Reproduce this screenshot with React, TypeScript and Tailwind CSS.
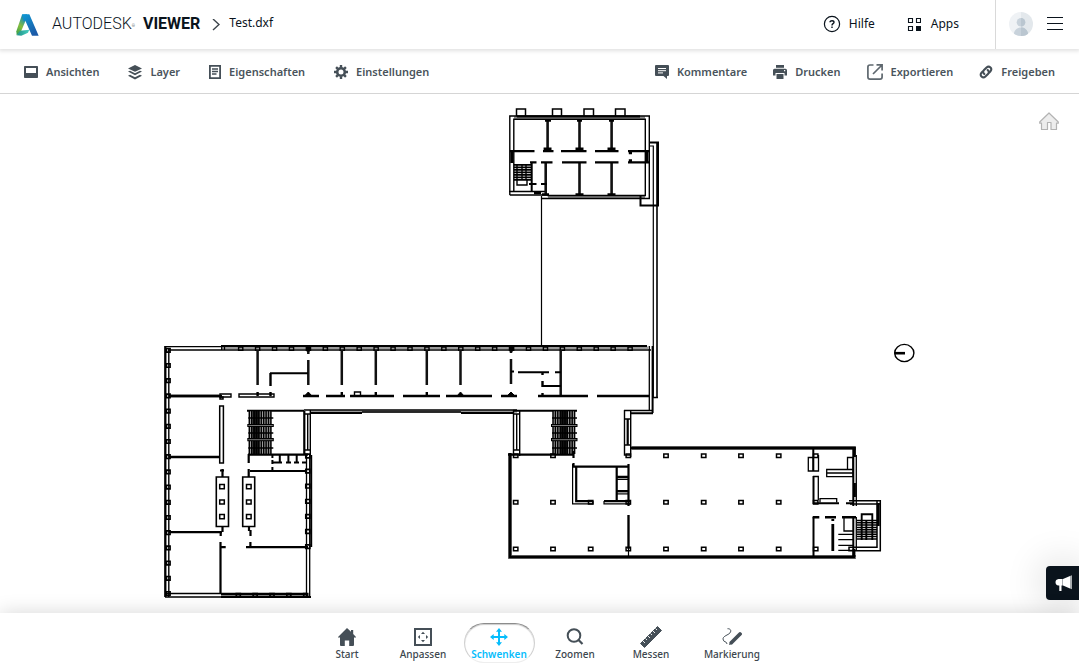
import React from "react";

function AutodeskLogo() {
  return (
    <svg viewBox="0 0 69 66" className="h-[22px] w-[23px] shrink-0" aria-hidden="true">
      <defs>
        <linearGradient id="leg-left" x1="0.7" y1="0" x2="0.3" y2="1">
          <stop offset="0" stopColor="#0a78be" />
          <stop offset="0.3" stopColor="#3fa08a" />
          <stop offset="0.6" stopColor="#86bc3c" />
          <stop offset="1" stopColor="#3fa34a" />
        </linearGradient>
        <linearGradient id="leg-right" x1="0" y1="0" x2="0.6" y2="1">
          <stop offset="0" stopColor="#0d9bd6" />
          <stop offset="1" stopColor="#1c5aa8" />
        </linearGradient>
        <linearGradient id="leg-base" x1="0" y1="0" x2="1" y2="0">
          <stop offset="0" stopColor="#1f8f86" />
          <stop offset="1" stopColor="#45d0c0" />
        </linearGradient>
      </defs>
      <path d="M18 2 L33 1 L28 22 L16 50 L2 64 L1 52 Z" fill="url(#leg-left)" />
      <path d="M18 1 H40 L68 65 H48 L28 20 L23 22 Z" fill="url(#leg-right)" />
      <path d="M2 64 L12 50 L40 47 L36 56 L16 65 Z" fill="url(#leg-base)" />
    </svg>
  );
}

function HelpIcon() {
  return (
    <svg viewBox="0 0 18 18" className="size-[18px]" fill="none" stroke="#0a131c" aria-hidden="true">
      <circle cx="9" cy="9" r="7.6" strokeWidth="1.2" />
      <path d="M7 7.2 C7 5.2 11 5.2 11 7.3 C11 8.8 9 8.6 9 10.4 M9 11.6 V13" strokeWidth="1.4" />
    </svg>
  );
}

function AppsIcon() {
  return (
    <svg viewBox="0 0 14 14" className="size-[14px]" fill="none" stroke="#0a131c" aria-hidden="true">
      <path d="M1.5 1.5 H5.5 V5.5 H1.5 Z M9.5 1.5 H13.5 V5.5 H9.5 Z M1.5 9.5 H5.5 V13.5 H1.5 Z" strokeWidth="1.1" />
      <path d="M9 9 H14 V14 H9 Z" fill="#0a131c" stroke="none" />
    </svg>
  );
}

function Avatar() {
  return (
    <svg viewBox="0 0 24 24" className="size-6" aria-hidden="true">
      <defs>
        <clipPath id="avatar-clip">
          <circle cx="12" cy="12" r="12" />
        </clipPath>
      </defs>
      <g clipPath="url(#avatar-clip)">
        <path d="M0 0 H12 V24 H0 Z" fill="#eff2f5" />
        <path d="M12 0 H24 V24 H12 Z" fill="#e3e8ec" />
        <circle cx="12" cy="10.3" r="4.3" fill="#c8d2db" />
        <path d="M4.5 24 C5 17 9 15.5 12 15.5 C15 15.5 19 17 19.5 24 Z" fill="#c8d2db" />
        <path d="M12 6 A4.3 4.3 0 0 1 12 14.6 Z M12 15.5 C15 15.5 19 17 19.5 24 H12 Z" fill="#bac6d0" />
      </g>
    </svg>
  );
}

function ViewsIcon() {
  return (
    <svg viewBox="0 0 14 12" className="h-3 w-[14px]" aria-hidden="true">
      <path fillRule="evenodd" fill="#454f57" d="M.8 0 H13.2 Q14 0 14 .8 V11.2 Q14 12 13.2 12 H.8 Q0 12 0 11.2 V.8 Q0 0 .8 0 Z M2 2 V7 H12 V2 Z" />
    </svg>
  );
}

function LayersIcon() {
  return (
    <svg viewBox="0 0 14 15" className="h-[15px] w-[14px]" fill="#454f57" aria-hidden="true">
      <path d="M7 0 L14 3.4 L7 6.8 L0 3.4 Z" />
      <path d="M0 6.6 L2 5.7 L7 8.2 L12 5.7 L14 6.6 L7 10.2 Z" />
      <path d="M0 10.7 L2 9.8 L7 12.3 L12 9.8 L14 10.7 L7 14.6 Z" />
    </svg>
  );
}

function PropertiesIcon() {
  return (
    <svg viewBox="0 0 12 14" className="h-[14px] w-3" fill="none" stroke="#454f57" aria-hidden="true">
      <path d="M.9 .9 H11.1 V13.1 H.9 Z" strokeWidth="1.8" />
      <path d="M3 4 H9 M3 6.5 H9 M3 9 H7.5" strokeWidth="1.3" />
    </svg>
  );
}

function GearIcon() {
  return (
    <svg viewBox="0 0 14 14" className="size-[14px]" fill="none" stroke="#454f57" aria-hidden="true">
      <circle cx="7" cy="7" r="3.8" strokeWidth="2.6" />
      <path
        d="M7 0 V2.5 M7 11.5 V14 M0 7 H2.5 M11.5 7 H14 M2.1 2.1 L3.8 3.8 M10.2 10.2 L11.9 11.9 M11.9 2.1 L10.2 3.8 M2.1 11.9 L3.8 10.2"
        strokeWidth="2.4"
      />
    </svg>
  );
}

function CommentIcon() {
  return (
    <svg viewBox="0 0 14 14" className="size-[14px]" aria-hidden="true">
      <path d="M1 0 H13 Q14 0 14 1 V10 Q14 11 13 11 H12 V14 L8.5 11 H1 Q0 11 0 10 V1 Q0 0 1 0 Z" fill="#454f57" />
      <path d="M3 3.5 H11 M3 5.7 H11 M3 7.9 H8" stroke="#fff" strokeWidth="1" />
    </svg>
  );
}

function PrinterIcon() {
  return (
    <svg viewBox="0 0 14 14" className="size-[14px]" fill="#454f57" aria-hidden="true">
      <path d="M3 0 H11 V2.8 H3 Z" />
      <path fillRule="evenodd" d="M1.5 3.8 H12.5 Q14 3.8 14 5.3 V10.5 H11.5 V8 H2.5 V10.5 H0 V5.3 Q0 3.8 1.5 3.8 Z M11 5 V6.2 H12.2 V5 Z" />
      <path d="M3.5 9 H10.5 V14 H3.5 Z" />
    </svg>
  );
}

function ExportIcon() {
  return (
    <svg viewBox="0 0 16 16" className="size-4" fill="none" stroke="#5f686f" aria-hidden="true">
      <path d="M6.5 1 H3 Q.9 1 .9 3 V13 Q.9 15.1 3 15.1 H13 Q15.1 15.1 15.1 13 V9.5" strokeWidth="1.7" />
      <path d="M6 10 L14.5 1.5 M9.5 .9 H15.1 V6.5" strokeWidth="1.7" />
    </svg>
  );
}

function LinkIcon() {
  return (
    <svg viewBox="0 0 14 14" className="size-[14px]" fill="none" stroke="#454f57" strokeWidth="2.1" strokeLinecap="round" aria-hidden="true">
      <path d="M5.3 9 C3.8 7.6 4 6.1 5 5.1 L7.6 2.5 C10.2 0 14 3.6 11.5 6.2 L10.3 7.5" />
      <path d="M8.7 5 C10.2 6.4 10 7.9 9 8.9 L6.4 11.5 C3.8 14 0 10.4 2.5 7.8 L3.7 6.5" />
    </svg>
  );
}

function HomeIcon() {
  return (
    <svg viewBox="0 0 18 18" className="size-[18px]" fill="#454f57" aria-hidden="true">
      <path d="M9 0 L13 3.8 V2 H15.2 V6 L18 8.9 V9.6 H16 V17 Q16 18 15 18 H11.2 V12.5 H6.8 V18 H3 Q2 18 2 17 V9.6 H0 V8.9 Z" />
    </svg>
  );
}

function FitIcon() {
  return (
    <svg viewBox="0 0 18 18" className="size-[18px]" aria-hidden="true">
      <path d="M1 1 H17 V17 H1 Z" fill="none" stroke="#454f57" strokeWidth="2" />
      <path d="M9 3.8 L11 6 H7 Z M9 14.2 L11 12 H7 Z M3.8 9 L6 7 V11 Z M14.2 9 L12 7 V11 Z" fill="#454f57" />
    </svg>
  );
}

function PanIcon() {
  return (
    <svg viewBox="0 0 18 18" className="size-[18px]" aria-hidden="true">
      <path d="M9 2 V16 M2 9 H16" stroke="#06bdfc" strokeWidth="2" />
      <path d="M9 0 L12 3.7 H6 Z M9 18 L12 14.3 H6 Z M0 9 L3.7 6 V12 Z M18 9 L14.3 6 V12 Z" fill="#06bdfc" />
    </svg>
  );
}

function ZoomIcon() {
  return (
    <svg viewBox="0 0 18 18" className="size-[18px]" fill="none" stroke="#454f57" aria-hidden="true">
      <circle cx="8" cy="7.5" r="6.3" strokeWidth="2" />
      <path d="M12.3 11.8 L16.5 16" strokeWidth="2.2" />
    </svg>
  );
}

function RulerIcon() {
  return (
    <svg viewBox="0 0 22 22" className="size-[22px]" aria-hidden="true">
      <path d="M17.5 .5 L21.5 4.5 L4.5 21.5 L.5 17.5 Z" fill="#454f57" stroke="#454f57" strokeLinejoin="round" />
      <path d="M3 15 L5 17 M5.5 12.5 L7 14 M8 10 L10 12 M10.5 7.5 L12 9 M13 5 L15 7 M15.5 2.5 L17 4" stroke="#fff" strokeWidth="0.9" />
    </svg>
  );
}

function MarkupIcon() {
  return (
    <svg viewBox="0 0 20 18" className="h-[18px] w-5" fill="none" stroke="#454f57" aria-hidden="true">
      <path d="M5.5 .7 C9 .5 10 3.5 7 5.8 C4.5 7.5 1 8.5 1 11 C1 14.5 5 13 5 16" strokeWidth="1" />
      <path d="M9.5 14.5 L18 6" strokeWidth="3.8" strokeLinecap="round" />
      <path d="M7 17 L8 13.5 L10.8 16 Z" fill="#454f57" stroke="none" />
    </svg>
  );
}

function MegaphoneIcon() {
  return (
    <svg viewBox="0 0 18 17" className="h-[17px] w-[18px]" aria-hidden="true">
      <path d="M3.5 4 H7 V10.5 H6.5 V16 H4.3 V10.5 H3.5 Q.5 10 .5 7.2 Q.5 4.5 3.5 4 Z" fill="#fff" />
      <path d="M8 4 L15 1 V13.5 L8 10.5 Z" fill="#fff" />
      <path d="M7 4 H8 V10.5 H7 Z M15 1 L17 .3 V14.3 L15 13.5 Z" fill="#a9adb1" />
    </svg>
  );
}

/* Rectangle outline centred on each [x, y] pair. */
function squares(points: number[][], w: number, h: number) {
  return points.map(([x, y]) => `M${x - w / 2} ${y - h / 2} h${w} v${h} h${-w} Z`).join(" ");
}

const hline = (y: number, segments: number[][]) => segments.map(([a, b]) => `M${a} ${y} H${b}`).join(" ");
const range = (count: number, start: number, step: number) => Array.from({ length: count }, (_, i) => start + i * step);

function Stairs({ x, dark }: { x: number; dark: number }) {
  return (
    <g>
      <path d={`M${x} 432.5 h22`} stroke="#aaa" strokeWidth="42" />
      <path d={range(10, x, 2.4).map((v) => `M${v} 411 V454`).join(" ")} strokeWidth="1.5" />
      <path d={`M${dark} 411 V454`} strokeWidth="7" opacity="0.85" />
      <path d={range(3, 418, 15).map((v) => `M${x - 1} ${v} h25`).join(" ")} strokeWidth="1.5" />
      <path d={`M${x - 2} 425.5 h26.5 M${x - 2} 439.7 h26.5`} strokeWidth="3.2" />
      <path d={`M${x - 1} 425.5 h24.5 M${x - 1} 439.7 h24.5`} stroke="#777" strokeWidth="1" />
    </g>
  );
}

function FloorPlan() {
  const topPosts = range(24, 240.7, 16.93).map((x) => [x, 348.7]);
  const leftPosts = range(17, 350.3, 15.2).map((y) => [168.3, y]);
  const rightPosts = range(7, 456, 15.1).map((y) => [307.8, y]);
  const bottomPosts = range(5, 238.3, 16.85).map((x) => [x, 595]);
  const columns = [515.7, 553, 590.7, 628.3, 666, 703.7, 741, 778.7, 815.7];
  const hallPosts = [
    ...columns.filter((x) => x !== 590.7).map((x) => [x, 455.7]),
    ...columns.map((x) => [x, 502.3]),
    ...columns.map((x) => [x, 549]),
  ];
  return (
    <svg viewBox="0 94 1079 519" className="h-full w-full" fill="none" stroke="#000" role="img" aria-label="Test.dxf">
      {/* North wing */}
      <path d="M516.5 117 V109 H525.5 V117 M552.5 117 V109 H561.5 V117 M584 117 V109 H593.5 V117 M615.5 117 V109 H625 V117" strokeWidth="1.5" />
      <path d="M514 117.5 H645 M548 197 H645" stroke="#888" strokeWidth="2.5" />
      <path d="M509.8 195 V116 H649.3 V198.5 H541 M513.8 192 V119.3 H645.3 V195.5 H548 V195 H509.8 M509 191.5 H546" strokeWidth="1.4" />
      <path d="M517 116.4 H640" strokeWidth="2.4" />
      <path d="M547.6 120 V151 M579.5 120 V151 M611.6 120 V151 M579.5 162 V195 M611.6 162 V195 M545.7 162 V194" stroke="#111" strokeWidth="2.6" />
      <path d="M511.8 151 V163 M647 151 V163" strokeWidth="3" />
      <path d={hline(151.2, [[510, 534.5], [543, 553.5], [561, 586.5], [595, 618.5], [628, 649]])} strokeWidth="2.2" />
      <path d={hline(162.4, [[530, 536.5], [541, 552.5], [562, 586.5], [595, 618.5], [628, 649]])} strokeWidth="2.2" />
      <path d="M543.6 148.8 H551.5 M575.5 148.8 H583.5 M607.5 148.8 H615.5 M545 120.5 H551 M577 120.5 H582 M609 120.5 H614 M575.5 194.5 H583.5 M607.5 194.5 H615.5 M534 193 H541 M542 194.5 H549" strokeWidth="2.6" />
      <path d="M531.7 162 V191 M529 184 H536.5 M541 184 H547" strokeWidth="2" />
      <path d="M628.8 152.8 H632 M628.8 160.7 H632" strokeWidth="3" />
      <path d={range(7, 164.8, 2.5).map((y) => `M514 ${y} H531`).join(" ")} strokeWidth="1.8" />
      <path d="M517 164 V185 H527 V180 M522 164 V180 M526 164 V180" strokeWidth="1.4" />
      <path d="M649 142.5 H658 V205.5 H640.5 V196" strokeWidth="2" />
      <path d="M649 146 H653.3 V397 M541.5 196 V346" strokeWidth="1.2" />
      <path d="M657 142 V397.5 M653 397.5 H658" strokeWidth="1.6" />

      {/* Connecting corridor */}
      <path d="M222 347.8 H648 M310 411.5 H517" stroke="#999" strokeWidth="2.6" />
      <path d="M165 346.7 H221 M168 350 H651 M221.7 345 V350 M224.5 345 V350" strokeWidth="1.3" />
      <path d="M221 346 H647" strokeWidth="2" />
      <path d={squares(topPosts, 4.2, 3.4)} strokeWidth="1.4" />
      <path d="M257.6 350 V385 M341.8 350 V385 M375.8 350 V385 M426.8 350 V385 M460.5 350 V385 M308.3 347 V354 M308.3 360 V385 M511 347 V353 M511 359 V384 M560.7 350 V396" stroke="#111" strokeWidth="2.5" />
      <path d="M257.6 392 V396 M270.5 392 V396 M341.8 392 V396 M375.8 392 V396 M426.8 392 V396 M542.5 393 V396 M542.5 381 V387 M542.5 372 V375 M270.5 373 V386" strokeWidth="2.4" />
      <path d="M308.3 392 L312 396 H304.5 Z M460.5 392 L464 396 H457 Z M511 392 L515 396 H507 Z M306.5 347 H310 V351 H306.5 Z M509.5 347 H513 V351 H509.5 Z" fill="#000" />
      <path d="M270 373.2 H308 M542 386 H561 M518 372.2 H549 M555 372.2 H561 M511 371.5 H514" strokeWidth="1.9" />
      <path d={hline(396, [[169, 222], [303, 319], [326, 345], [350, 394], [403, 440], [446, 492], [501, 517], [538, 588], [597, 649]])} strokeWidth="2.3" />
      <path d="M220 394 H231 V397 H220 Z M239 394 H274 V397 H239 Z M354.5 392 H360.5 V396 H354.5 Z" strokeWidth="1.4" />
      <path d="M247 410.8 H304 M513 410.8 H577 M311 413 H362 M461 413 H513 M631 413.3 H653" strokeWidth="2" />
      <path d="M304 410 H517 M362 412 H461 M624 410.5 H653 M649.3 346 V411" strokeWidth="1.3" />
      <path d="M652.6 346 V413" strokeWidth="2" />

      {/* Pillars along the corridor */}
      <path d="M304.3 411 V454 M627.7 419 V445" strokeWidth="2.2" />
      <path d="M307.7 414 V450 M310.3 410 V455 M304 414 H310 M304 450 H310 M513.5 410 V456 M519.7 410 V456 M516.7 414 V450 M513.5 414 H520 M513.5 450 H520 M624.5 410 V455 H631 M630.7 410 V457 M624.5 419 H631 M624.5 445 H631" strokeWidth="1.4" />
      <Stairs x={249.3} dark={256} />
      <Stairs x={553} dark={563.7} />

      {/* West wing */}
      <path d="M165.3 346 V597 M169 396 H220 M169 457 H220 M169 532.2 H222" strokeWidth="2.3" />
      <path d="M168.8 348 V597 M165 593.5 H306 M165 597 H221" strokeWidth="1.4" />
      <path d={squares(leftPosts, 3.6, 3.6)} strokeWidth="1.6" />
      <path d="M219.7 406 H223.4 V463 H219.7 Z M220 397 H223 V399 H220 Z" strokeWidth="1.5" />
      <path d="M216.3 477 H228.5 V526.5 H216.3 Z M242.7 477 H254.7 V526.5 H242.7 Z" strokeWidth="1.6" />
      <path d={squares([[222, 486.7], [222, 502], [222, 516.7], [248.8, 486.7], [248.8, 502], [248.8, 516.7]], 4.6, 4.2)} strokeWidth="1.5" />
      <path d="M220 470.5 H224 M248.7 469 V477 M222.5 469 V477 M222.5 526 V532 M220.7 531 V536 M249 526 V531 M250.5 530 V536 M248.7 454 V463 M250.4 542 V548 M220.5 542 V594 M219.5 547.2 H225.7 M246 547.2 H308 M250 471 H307 M248 454.7 H308" strokeWidth="2.2" />
      <path d={hline(462.5, [[272, 282], [286, 291], [294, 299], [302, 307]])} strokeWidth="1.8" />
      <path d="M279.8 455 V462 M288.4 455 V462 M296.7 455 V462 M272.4 454 V458 M272.4 460 V464 M272.4 467 V471" strokeWidth="2" />
      <path d="M306.5 455 V597 M309.7 455 V597" strokeWidth="1.3" />
      <path d="M311.2 455 V547" strokeWidth="2" />
      <path d={squares(rightPosts, 4, 3.6) + " " + squares(bottomPosts, 4, 3)} strokeWidth="1.7" />
      <path d="M221 594.5 H306 M221 597 H311" strokeWidth="1.9" />

      {/* East hall */}
      <path d="M510 453 V557 H856 M631 448 H856" stroke="#777" strokeWidth="4" />
      <path d="M510 453 V557 H855 M631 448 H855" strokeWidth="2.6" />
      <path d="M508 454.7 H574 M573.5 451 V458 M573.5 463 V467" strokeWidth="2.2" />
      <path d={squares(hallPosts, 4.4, 3.6)} strokeWidth="1.5" />
      <path d="M616 478 H629 M616 492.5 H629" stroke="#999" strokeWidth="3" />
      <path d="M573 466.6 H629 M576.2 467 V501.2 H593 M604 501.2 H631 M616.7 466 V501 M628.5 464 V506 M616 476.8 H629 M616 491 H629" strokeWidth="2.2" />
      <path d="M572.6 464 V503.8 H593 V501 M604 501 V503.8 H631 M616 479.5 H629 M616 494 H629 M628.5 515 V557" strokeWidth="1.2" />
      <path d="M628.5 515 V549" strokeWidth="2.3" />

      {/* East stairwell and side rooms */}
      <path d="M853.3 447 V506 M853.3 517 V557 M813.5 476 V504 M813.5 517 V557 M813.3 449 V471 M813 503.2 H839 M846 503.2 H854" strokeWidth="2" />
      <path d={hline(517.2, [[812.7, 819.3], [825, 836], [842, 856]])} strokeWidth="2.4" />
      <path d="M854.5 447 V457 M854.5 483 V497 M832.8 519 V521 M832.8 524 V551 M854 549 V557 M878.3 503 V526" strokeWidth="2.8" />
      <path d="M856.3 455 V506 M856.3 517 V550 M808.3 457.5 H813.3 V471 H808.3 Z M818.5 455 V471 H813 M813 476.5 H818.3 V500 M820 502.5 V498.7 H836.7 V502.5 M826.7 469.5 H853 V476.7 H826.7 Z M826.7 473 H853 M847.5 457.5 H853 V469.5 H847.5 Z M844 518 V531 H853 M838.3 534.3 H853 M838.3 539.7 H853 M838.3 545.3 H853 M838.3 550.3 H853" strokeWidth="1.3" />
      <path d="M849 500.8 H880.3 V550.8 H849 V547.3 H877 V501 M850 504 H880" strokeWidth="1.5" />
      <path d={range(9, 520.5, 2.3).map((y) => `M857 ${y} H877`).join(" ")} strokeWidth="1.5" />
      <path d="M861.7 540 V514.3 H872.3 V540 M866.3 520 V540" strokeWidth="1.9" />

      {/* North marker */}
      <ellipse cx="904.3" cy="353" rx="9.6" ry="8.6" strokeWidth="1.4" />
      <path d="M894.5 353.2 H905" strokeWidth="2.6" />
    </svg>
  );
}

const leftTools = [
  { label: "Ansichten", icon: <ViewsIcon /> },
  { label: "Layer", icon: <LayersIcon /> },
  { label: "Eigenschaften", icon: <PropertiesIcon /> },
  { label: "Einstellungen", icon: <GearIcon /> },
];

const rightTools = [
  { label: "Kommentare", icon: <CommentIcon /> },
  { label: "Drucken", icon: <PrinterIcon /> },
  { label: "Exportieren", icon: <ExportIcon /> },
  { label: "Freigeben", icon: <LinkIcon /> },
];

const bottomTools = [
  { label: "Start", icon: <HomeIcon />, width: "w-[71px]" },
  { label: "Anpassen", icon: <FitIcon />, width: "w-[71px]" },
  { label: "Schwenken", icon: <PanIcon />, width: "w-[71px]", active: true },
  { label: "Zoomen", icon: <ZoomIcon />, width: "w-[71px]" },
  { label: "Messen", icon: <RulerIcon />, width: "w-[71px]" },
  { label: "Markierung", icon: <MarkupIcon />, width: "w-[81px]" },
];

function ToolButton({ label, icon }: { label: string; icon: React.ReactNode }) {
  return (
    <button type="button" className="flex items-center gap-2 text-[11px] leading-4 font-semibold text-[#4a545c]">
      {icon}
      {label}
    </button>
  );
}

export default function App() {
  return (
    <div className="flex h-screen flex-col overflow-hidden bg-white font-['Noto_Sans',sans-serif] text-[#0a131c]">
      <header className="relative z-10 flex h-[49px] shrink-0 items-center bg-white pl-4 shadow-[0_1px_4px_1px_rgba(0,0,0,0.12)]">
        <AutodeskLogo />
        <h1 className="ml-[13px] flex items-start gap-2 pb-px font-[Roboto,sans-serif] text-base leading-5">
          <span className="font-light">
            AUTODESK<sup className="text-[4px]">®</sup>
          </span>
          <span className="font-bold">VIEWER</span>
        </h1>
        <svg viewBox="0 0 8 12" className="ml-3 h-3 w-2" fill="none" stroke="#3c444b" strokeWidth="1.4" aria-hidden="true">
          <path d="M1 0 L7 5.5 L1 11" />
        </svg>
        <span className="ml-[9px] pb-[3px] text-xs leading-4">Test.dxf</span>
        <div className="ml-auto flex h-full items-center">
          <button type="button" className="flex items-center gap-2 pb-0.5 text-xs leading-4">
            <HelpIcon />
            Hilfe
          </button>
          <button type="button" className="ml-8 flex items-center gap-[10px] pb-0.5 text-xs leading-4">
            <AppsIcon />
            Apps
          </button>
          <div className="ml-9 flex h-full items-center gap-[14px] border-l border-[#d9d9d9] pr-4 pb-px pl-[13px]">
            <button type="button" aria-label="Profil">
              <Avatar />
            </button>
            <button type="button" aria-label="Menü">
              <svg viewBox="0 0 16 14" className="h-[14px] w-4" stroke="#0a131c" strokeWidth="1" aria-hidden="true">
                <path d="M0 .5 H16 M0 6.5 H16 M0 12.5 H16" />
              </svg>
            </button>
          </div>
        </div>
      </header>

      <nav className="flex h-[45px] shrink-0 items-center justify-between border-b border-[#d5d5d5] bg-white px-6 pt-0.5">
        <div className="flex items-center gap-[29px]">
          {leftTools.map((tool) => (
            <ToolButton key={tool.label} label={tool.label} icon={tool.icon} />
          ))}
        </div>
        <div className="flex items-center gap-[26px]">
          {rightTools.map((tool) => (
            <ToolButton key={tool.label} label={tool.label} icon={tool.icon} />
          ))}
        </div>
      </nav>

      <main className="relative min-h-0 flex-1">
        <FloorPlan />
        <button type="button" aria-label="Ausgangsansicht" className="absolute top-[18px] right-5">
          <svg viewBox="0 0 20 19" className="h-[19px] w-5" fill="#ededed" stroke="#b3b3b3" strokeLinejoin="round" aria-hidden="true">
            <path d="M10 1 L19.3 10 V11.2 H17.5 V17.5 H12 V10.5 H8.5 V17.5 H2.5 V11.2 H.7 V10 Z" strokeWidth="1.2" />
          </svg>
        </button>
        <button
          type="button"
          aria-label="Feedback"
          className="absolute right-0 bottom-[13px] flex h-[34px] w-[33px] items-center justify-center rounded-l bg-[#0a131c] pl-0.5 shadow-[0_0_40px_rgba(0,0,0,0.2)]"
        >
          <MegaphoneIcon />
        </button>
      </main>

      <footer className="relative flex h-[59px] shrink-0 justify-center bg-white pt-[10px] pl-[5px] shadow-[0_0_20px_rgba(0,0,0,0.16)]">
        <div className="flex items-start gap-[5px]">
          {bottomTools.map((tool) => (
            <button
              key={tool.label}
              type="button"
              className={`flex h-10 flex-col items-center text-[10px] leading-4 ${tool.width} ${
                tool.active
                  ? "rounded-[20px] border border-t-[#8c8c8c] border-r-[#d0d0d0] border-b-[#eeeeee] border-l-[#d0d0d0] pt-1 font-semibold text-[#06bdfc] shadow-[inset_0_1px_1px_rgba(0,0,0,0.2)]"
                  : "pt-[5px] font-medium text-[#3c464e]"
              }`}
            >
              <span className="flex h-[18px] items-center justify-center">{tool.icon}</span>
              {tool.label}
            </button>
          ))}
        </div>
      </footer>
    </div>
  );
}
